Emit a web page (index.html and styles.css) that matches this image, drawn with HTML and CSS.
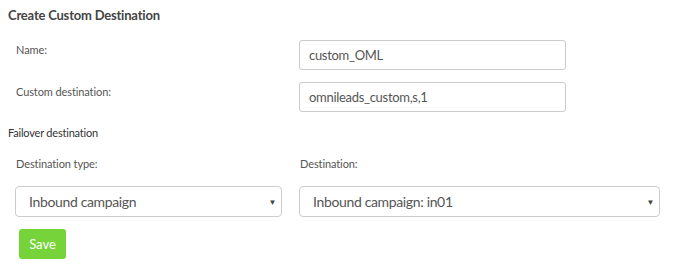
FILE: index.html
```html
<html>
  <head>
    <title>Create Custom Destination</title>
    <meta name="viewport" content="width=device-width, initial-scale=1.0" />
    <link rel="stylesheet" href="styles.css">
  </head>
  <body>
    <h1 class="titulo">Create Custom Destination</h1>
    <form class="formulario">
      <div class="fila">
        <label class="etiqueta">Name:</label>
        <input class="campo" type="text" value="custom_OML">
      </div>
      <div class="fila">
        <label class="etiqueta">Custom destination:</label>
        <input class="campo" type="text" value="omnileads_custom,s,1">
      </div>

      <h2 class="subtitulo">Failover destination</h2>

      <div class="destinos">
        <div class="col">
          <label class="etiqueta">Destination type:</label>
          <div class="selector">
            <span>Inbound campaign</span>
            <span class="flecha">&#9660;</span>
          </div>
        </div>
        <div class="col">
          <label class="etiqueta">Destination:</label>
          <div class="selector">
            <span>Inbound campaign: in01</span>
            <span class="flecha">&#9660;</span>
          </div>
        </div>
      </div>

      <button type="button" class="guardar">Save</button>
    </form>
  </body>
</html>
```

FILE: styles.css
```css
body {
  margin: 0;
  padding: 8px 17px 0 8px;
  background-color: white;
  font-family: Lato, "Open Sans", sans-serif;
  color: #555;
}
.titulo {
  margin: 0;
  font-size: 13px;
  font-weight: bold;
  letter-spacing: -0.2px;
  color: #444;
  line-height: 14px;
}
.formulario {
  margin: 0;
}
.fila {
  display: grid;
  grid-template-columns: 291px 267px;
  align-items: start;
  margin-top: 12px;
}
.fila:first-child {
  margin-top: 18px;
}
.fila .etiqueta {
  padding-left: 8px;
  padding-top: 3px;
}
.etiqueta {
  font-size: 11px;
  letter-spacing: -0.1px;
  color: #555;
}
.campo {
  height: 30px;
  width: 267px;
  box-sizing: border-box;
  border: 1px solid #ccc;
  border-radius: 3px;
  padding: 0 9px;
  font-family: inherit;
  font-size: 13px;
  letter-spacing: -0.3px;
  color: #555;
}
.subtitulo {
  margin: 13px 0 0 0;
  font-size: 11px;
  font-weight: normal;
  letter-spacing: -0.2px;
  color: #333;
  line-height: 16px;
}
.destinos {
  display: grid;
  grid-template-columns: 267px 361px;
  column-gap: 17px;
  margin-top: 16px;
  padding-left: 7px;
}
.col .etiqueta {
  display: block;
  padding-left: 1px;
  line-height: 14px;
  margin-bottom: 15px;
}
.selector {
  display: flex;
  justify-content: space-between;
  align-items: center;
  height: 31px;
  box-sizing: border-box;
  border: 1px solid #ccc;
  border-radius: 4px;
  padding: 0 5px 0 13px;
  font-size: 14px;
  letter-spacing: -0.35px;
  color: #555;
}
.flecha {
  font-size: 8px;
  color: #444;
}
.guardar {
  display: block;
  margin: 12px 0 0 11px;
  width: 47px;
  height: 30px;
  border: none;
  border-radius: 3px;
  background-color: #76d33a;
  color: white;
  font-family: inherit;
  font-size: 13px;
}
```
